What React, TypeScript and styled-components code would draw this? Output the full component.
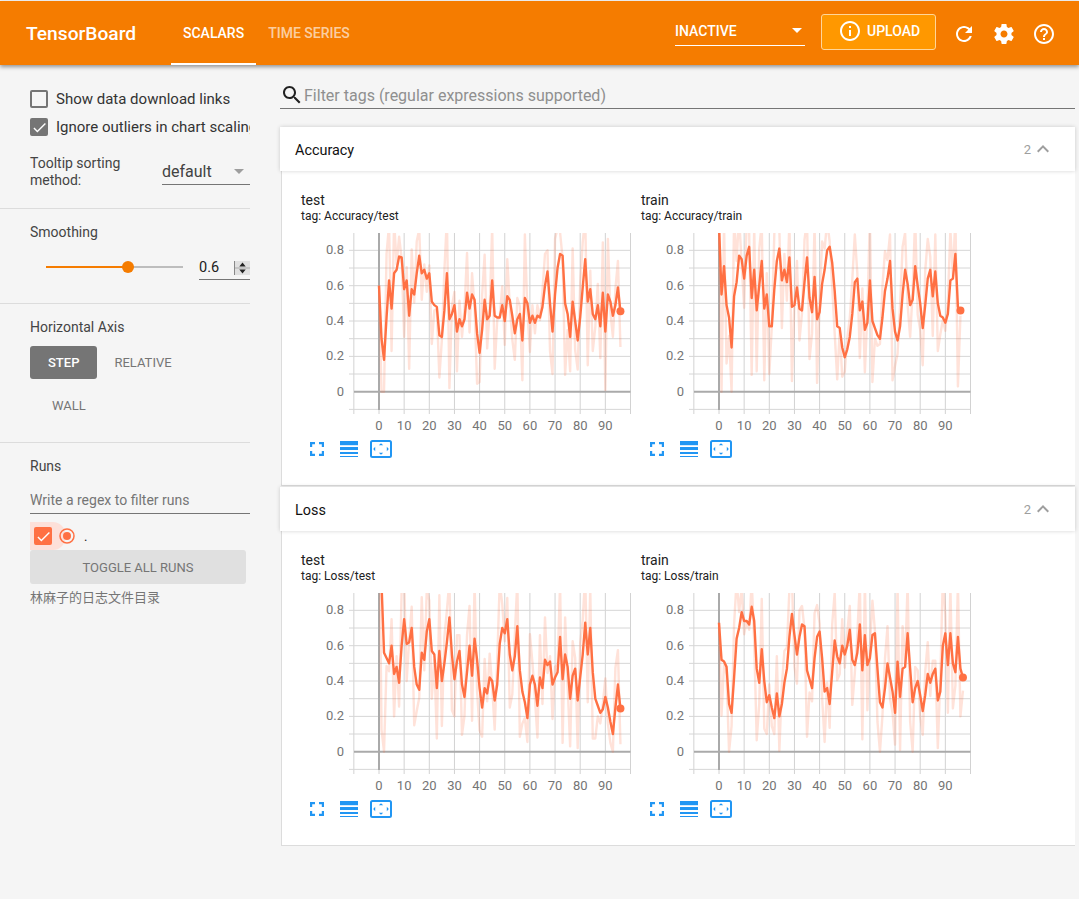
import React from "react";
import styled, { createGlobalStyle } from "styled-components";

const Global = createGlobalStyle`
  html, body { margin: 0; padding: 0; background: #f5f5f5; }
  body { font-family: Roboto, "Noto Sans CJK SC", sans-serif; color: #212121; }
  * { box-sizing: border-box; }
  input { font-family: inherit; }
`;

const Page = styled.div`
  min-height: 899px;
  padding-top: 1px;
  background: #f5f5f5;
  overflow: hidden;
`;
const Header = styled.header`
  position: relative;
  z-index: 2;
  height: 64px;
  background: #f57c00;
  display: flex;
  align-items: stretch;
  color: #fff;
  box-shadow: 0 2px 4px rgba(0, 0, 0, 0.4);
  padding-left: 26px;
  padding-right: 23px;
`;
const Logo = styled.div`
  font-size: 19.2px;
  font-weight: 500;
  line-height: 65px;
  width: 145px;
`;
const Tab = styled.div<{ $active?: boolean }>`
  font-size: 14px;
  font-weight: 500;
  line-height: 64px;
  padding: 0 12px;
  height: 64px;
  color: ${(p) => (p.$active ? "#fff" : "rgba(255,255,255,0.65)")};
  border-bottom: 2px solid ${(p) => (p.$active ? "#fff" : "transparent")};
`;
const Spacer = styled.div`
  flex: 1;
`;
const RunSelect = styled.div`
  width: 130px;
  height: 30px;
  margin-top: 15px;
  border-bottom: 1px solid #fff;
  font-size: 14px;
  font-weight: 500;
  line-height: 30px;
  display: flex;
  justify-content: space-between;
  align-items: center;
  padding-right: 3px;
`;
const Caret = styled.div<{ $color: string }>`
  width: 0;
  height: 0;
  border-left: 5px solid transparent;
  border-right: 5px solid transparent;
  border-top: 5px solid ${(p) => p.$color};
`;
const Upload = styled.div`
  width: 115px;
  height: 36px;
  margin: 13px 16px 0 16px;
  background: #ff9800;
  border: 1px solid #ffd699;
  border-radius: 3px;
  display: flex;
  align-items: center;
  padding-left: 16px;
  gap: 5px;
  font-size: 14px;
  font-weight: 500;
  padding-bottom: 2px;
`;
const HeaderIcons = styled.div`
  display: flex;
  gap: 16px;
  align-items: center;
  padding-top: 1px;
`;
const Body = styled.div`
  display: flex;
  align-items: flex-start;
`;
const Sidebar = styled.aside`
  width: 250px;
  flex: none;
`;
const Section = styled.section<{ $top: number; $bottom: number; $last?: boolean }>`
  padding: ${(p) => p.$top}px 0 ${(p) => p.$bottom}px 30px;
  border-bottom: ${(p) => (p.$last ? "none" : "1px solid #dcdcdc")};
`;
const CheckRow = styled.div`
  display: flex;
  align-items: center;
  gap: 8px;
  height: 18px;
  margin-bottom: 10px;
  font-size: 15px;
  color: #333;
  white-space: nowrap;
  overflow: hidden;
`;
const Box = styled.div<{ $checked?: boolean; $color?: string }>`
  width: 18px;
  height: 18px;
  flex: none;
  border-radius: 2px;
  border: 2px solid ${(p) => p.$color ?? "#757575"};
  background: ${(p) => (p.$checked ? p.$color ?? "#757575" : "transparent")};
  display: flex;
  align-items: center;
  justify-content: center;
  & > svg { flex: none; }
`;
const SortRow = styled.div`
  display: flex;
  align-items: flex-end;
  justify-content: space-between;
  margin-top: 19px;
`;
const SortLabel = styled.div`
  font-size: 14px;
  line-height: 17px;
  color: #444;
  width: 110px;
`;
const SortSelect = styled.div`
  width: 88px;
  height: 26px;
  margin-bottom: 4px;
  border-bottom: 1px solid #757575;
  font-size: 16px;
  line-height: 25px;
  color: #424242;
  display: flex;
  align-items: center;
  justify-content: space-between;
  padding-right: 6px;
`;
const SectionLabel = styled.div`
  font-size: 14px;
  line-height: 17px;
  color: #444;
`;
const SliderRow = styled.div`
  display: flex;
  align-items: center;
  margin-top: 14px;
  height: 25px;
  padding-left: 16px;
`;
const Track = styled.div`
  position: relative;
  width: 137px;
  height: 2px;
  margin-bottom: 1px;
  background: #bdbdbd;
`;
const Fill = styled.div`
  height: 2px;
  background: #f57c00;
`;
const Thumb = styled.div`
  position: absolute;
  top: -5px;
  width: 12px;
  height: 12px;
  margin-left: -6px;
  border-radius: 50%;
  background: #f57c00;
`;
const NumberBox = styled.div`
  width: 51px;
  height: 25px;
  margin-left: 16px;
  border-bottom: 1px solid #757575;
  font-size: 14.5px;
  line-height: 24px;
  padding-top: 1px;
  color: #212121;
  display: flex;
  justify-content: space-between;
  align-items: center;
`;
const Spin = styled.div`
  width: 16px;
  height: 14px;
  background: #e0e0e0;
  border-left: 1px solid #888;
  display: flex;
`;
const AxisButtons = styled.div`
  display: flex;
  flex-wrap: wrap;
  row-gap: 10px;
  margin-top: 10px;
  width: 200px;
`;
const AxisButton = styled.div<{ $active?: boolean; $pad: number }>`
  height: 33px;
  line-height: 33px;
  padding: 0 ${(p) => p.$pad}px;
  border-radius: 3px;
  font-size: 13px;
  font-weight: ${(p) => (p.$active ? 500 : 400)};
  background: ${(p) => (p.$active ? "#757575" : "transparent")};
  color: ${(p) => (p.$active ? "#fff" : "#757575")};
`;
const RegexInput = styled.input`
  display: block;
  width: 220px;
  height: 25px;
  margin-top: 14px;
  padding: 0 0 2px;
  border: 0;
  border-bottom: 1px solid #757575;
  background: transparent;
  font-size: 14px;
  outline: none;
  &::placeholder { color: #757575; opacity: 1; }
`;
const RunRow = styled.div`
  position: relative;
  height: 28px;
  margin-top: 8px;
  padding-left: 4px;
  display: flex;
  align-items: center;
  &::before {
    content: "";
    position: absolute;
    left: 0;
    top: 0;
    width: 35px;
    height: 28px;
    background: #fde0d9;
    border-radius: 0 12px 12px 0;
  }
`;
const RunParts = styled.div`
  position: relative;
  display: flex;
  align-items: center;
  gap: 7px;
  font-size: 13px;
`;
const RunName = styled.span`
  margin-left: 2px;
`;
const ToggleAll = styled.div`
  width: 216px;
  height: 34px;
  line-height: 35px;
  text-align: center;
  background: #e0e0e0;
  border-radius: 3px;
  font-size: 13px;
  color: #757575;
`;
const LogDir = styled.div`
  margin-top: 6px;
  font-size: 13px;
  line-height: 16px;
  color: #757575;
`;
const Main = styled.main`
  flex: 1;
  min-width: 0;
  padding: 16px 4px 0 30px;
`;
const Search = styled.div`
  height: 28px;
  display: flex;
  align-items: center;
  border-bottom: 1px solid #757575;
`;
const SearchInput = styled.input`
  flex: 1;
  border: 0;
  padding: 0;
  margin-top: 2px;
  background: transparent;
  font-size: 16px;
  outline: none;
  &::placeholder { color: #8f8f8f; opacity: 1; }
`;
const Card = styled.section`
  margin-bottom: 1px;
  &:first-of-type { margin-top: 18px; }
`;
const CardHeader = styled.div`
  height: 44px;
  background: #fff;
  display: flex;
  align-items: center;
  padding: 0 20px 0 15px;
  font-size: 14.4px;
  color: #111;
  position: relative;
  box-shadow: 0 0 4px rgba(0, 0, 0, 0.18);
`;
const CardTitle = styled.div`
  flex: 1;
  padding-top: 2px;
`;
const Count = styled.span`
  font-size: 13px;
  color: #9e9e9e;
  padding-top: 1px;
`;
const CardBody = styled.div`
  height: 315px;
  margin-left: 1px;
  background: #fff;
  border: 1px solid #dcdcdc;
  border-right: 0;
  border-top: 0;
  padding: 21px 0 0 19px;
  display: flex;
`;
const ChartCell = styled.div`
  width: 340px;
`;
const ChartName = styled.div`
  font-size: 14px;
  line-height: 17px;
  color: #212121;
`;
const ChartTag = styled.div`
  font-size: 12px;
  line-height: 14px;
  color: #212121;
`;
const ChartSvg = styled.svg`
  display: block;
  margin-top: 2px;
`;
const ChartTools = styled.div`
  display: flex;
  align-items: center;
  margin-top: 5px;
  height: 18px;
  padding-left: 9px;
`;
const ToolFull = styled.svg`
  margin-right: 16px;
`;
const ToolLines = styled.svg`
  margin-right: 12px;
`;

const ORANGE = "#ff7043";
const S0 = 78;
const STEP = 2.515;
const Y0 = 166.7;
const UNIT = 176.7;
const RIGHT = 329.5;

function Chart({ data, id }: { data: number[]; id: string }) {
  const x = (i: number) => S0 + i * STEP;
  const y = (v: number) => Y0 - v * UNIT;
  const raw = data.map((v, i) =>
    i === 0 ? v : Math.max(0, Math.min(1.3, (v - 0.6 * data[i - 1]) / 0.4))
  );
  const pts = (a: number[]) => a.map((v, i) => `${x(i).toFixed(2)},${y(v).toFixed(2)}`).join(" ");
  const last = data.length - 1;
  const columns = Array.from({ length: 12 }, (_, i) => S0 + (i - 1) * 25.15);
  return (
    <ChartSvg width="332" height="210" viewBox="0 0 332 210">
      <defs>
        <clipPath id={id}>
          <rect x="53" y="8" width="277" height="177" />
        </clipPath>
      </defs>
      {columns.map((gx) => (
        <line key={gx} x1={gx} x2={gx} y1="8" y2="189" stroke="#d2d2d2" />
      ))}
      {[8, 7, 6, 5, 4, 3, 2, 1, -1].map((k) => (
        <line key={k} x1="48" x2={RIGHT} y1={Y0 - (k / 10) * UNIT} y2={Y0 - (k / 10) * UNIT} stroke="#d6d6d6" />
      ))}
      <line x1="53" x2={RIGHT} y1={Y0} y2={Y0} stroke="#aaa" strokeWidth="2" />
      <line x1={S0} x2={S0} y1="8" y2="185" stroke="#aaa" strokeWidth="2" />
      <g clipPath={`url(#${id})`}>
        <polyline points={pts(raw)} fill="none" stroke={ORANGE} strokeOpacity="0.2" strokeWidth="2.4" strokeLinejoin="round" />
        <polyline points={pts(data)} fill="none" stroke={ORANGE} strokeWidth="2.4" strokeLinejoin="round" />
        <circle cx={x(last)} cy={y(data[last])} r="4" fill={ORANGE} />
      </g>
      {[0.8, 0.6, 0.4, 0.2, 0].map((v) => (
        <text key={v} x="43" y={y(v) + 4} textAnchor="end" fontSize="13" fill="#757575" fontFamily="Roboto, sans-serif">
          {v}
        </text>
      ))}
      {[0, 10, 20, 30, 40, 50, 60, 70, 80, 90].map((v) => (
        <text key={v} x={S0 + v * STEP} y="205" textAnchor="middle" fontSize="13" fill="#757575" fontFamily="Roboto, sans-serif">
          {v}
        </text>
      ))}
    </ChartSvg>
  );
}

function Tools() {
  return (
    <ChartTools>
      <ToolFull width="14" height="14" viewBox="0 0 14 14" fill="none" stroke="#2196f3" strokeWidth="2.2">
        <path d="M1.1 5V1.1H5M9 1.1h3.9V5M12.9 9v3.9H9M5 12.9H1.1V9" />
      </ToolFull>
      <ToolLines width="18" height="16" viewBox="0 0 18 16" fill="#2196f3">
        <rect x="0" y="0" width="18" height="4.2" />
        <rect x="0" y="6" width="18" height="3" />
        <rect x="0" y="11" width="18" height="2" />
        <rect x="0" y="15" width="18" height="1" />
      </ToolLines>
      <svg width="22" height="18" viewBox="0 0 22 18">
        <rect x="1" y="1" width="20" height="16" rx="1.5" fill="none" stroke="#2196f3" strokeWidth="2" />
        <path d="M11 3.2l2.2 2H8.8zM11 14.8l-2.2-2h4.4zM3.2 9l2-2.2v4.4zM18.8 9l-2 2.2V6.800z" fill="#2196f3" />
      </svg>
    </ChartTools>
  );
}

const CHECK = "M9 16.17L4.83 12l-1.42 1.41L9 19 21 7l-1.41-1.41z";
function Icon({ d, size = 24, fill = "#fff" }: { d: string; size?: number; fill?: string }) {
  return (
    <svg width={size} height={size} viewBox="0 0 24 24" fill={fill}>
      <path d={d} />
    </svg>
  );
}
const REFRESH = "M17.65 6.35C16.2 4.9 14.21 4 12 4c-4.42 0-7.99 3.58-7.99 8s3.57 8 7.99 8c3.73 0 6.84-2.55 7.73-6h-2.08c-.82 2.33-3.04 4-5.65 4-3.31 0-6-2.69-6-6s2.69-6 6-6c1.66 0 3.14.69 4.22 1.78L13 11h7V4l-2.35 2.35z";
const GEAR = "M19.43 12.98c.04-.32.07-.64.07-.98s-.03-.66-.07-.98l2.11-1.65c.19-.15.24-.42.12-.64l-2-3.46c-.12-.22-.39-.3-.61-.22l-2.49 1c-.52-.4-1.08-.73-1.69-.98l-.38-2.65C14.46 2.18 14.25 2 14 2h-4c-.25 0-.46.18-.49.42l-.38 2.65c-.61.25-1.17.59-1.69.98l-2.49-1c-.23-.09-.49 0-.61.22l-2 3.46c-.13.22-.07.49.12.64l2.11 1.65c-.04.32-.07.65-.07.98s.03.66.07.98l-2.11 1.65c-.19.15-.24.42-.12.64l2 3.46c.12.22.39.3.61.22l2.49-1c.52.4 1.08.73 1.69.98l.38 2.65c.03.24.24.42.49.42h4c.25 0 .46-.18.49-.42l.38-2.65c.61-.25 1.17-.59 1.69-.98l2.49 1c.23.09.49 0 .61-.22l2-3.46c.12-.22.07-.49-.12-.64l-2.11-1.65zM12 15.5c-1.93 0-3.5-1.57-3.5-3.5s1.57-3.5 3.5-3.5 3.5 1.57 3.5 3.5-1.57 3.5-3.5 3.5z";
const HELP = "M11 18h2v-2h-2v2zm1-16C6.48 2 2 6.48 2 12s4.48 10 10 10 10-4.48 10-10S17.52 2 12 2zm0 18c-4.41 0-8-3.59-8-8s3.59-8 8-8 8 3.59 8 8-3.59 8-8 8zm0-14c-2.21 0-4 1.79-4 4h2c0-1.1.9-2 2-2s2 .9 2 2c0 2-3 1.75-3 5h2c0-2.25 3-2.5 3-5 0-2.21-1.79-4-4-4z";
const INFO = "M11 17h2v-6h-2v6zm1-15C6.48 2 2 6.48 2 12s4.48 10 10 10 10-4.48 10-10S17.52 2 12 2zm0 18c-4.41 0-8-3.59-8-8s3.59-8 8-8 8 3.59 8 8-3.59 8-8 8zM11 9h2V7h-2v2z";
const SEARCH = "M15.5 14h-.79l-.28-.27C15.41 12.59 16 11.11 16 9.5 16 5.91 13.09 3 9.5 3S3 5.91 3 9.5 5.91 16 9.5 16c1.61 0 3.09-.59 4.23-1.57l.27.28v.79l5 4.99L20.49 19l-4.99-5zm-6 0C7.01 14 5 11.99 5 9.5S7.01 5 9.5 5 14 7.01 14 9.5 11.99 14 9.5 14z";
const LESS = "M12 8l-6 6 1.41 1.41L12 10.83l4.59 4.58L18 14z";

const ACC_TEST = [.6,.3,.18,.42,.63,.47,.67,.69,.765,.76,.58,.63,.43,.58,.55,.67,.77,.67,.69,.64,.67,.51,.49,.48,.32,.31,.46,.67,.41,.44,.49,.34,.41,.37,.41,.56,.47,.55,.52,.33,.22,.35,.52,.41,.43,.63,.43,.42,.42,.49,.4,.54,.52,.43,.33,.41,.44,.29,.53,.5,.39,.43,.39,.43,.42,.48,.6,.68,.5,.34,.55,.7,.78,.77,.5,.44,.31,.51,.4,.29,.42,.59,.75,.51,.58,.44,.41,.49,.37,.56,.34,.55,.51,.43,.49,.59,.455];
const ACC_TRAIN = [.95,.55,.71,.49,.42,.25,.54,.62,.77,.75,.64,.77,.82,.53,.69,.46,.6,.74,.47,.55,.37,.37,.58,.74,.81,.63,.69,.62,.76,.48,.49,.59,.47,.46,.62,.76,.53,.45,.65,.41,.45,.61,.69,.8,.82,.73,.57,.37,.36,.25,.195,.24,.31,.44,.62,.64,.46,.51,.35,.39,.63,.4,.36,.32,.3,.42,.57,.64,.74,.47,.34,.29,.37,.55,.69,.61,.49,.52,.71,.6,.5,.36,.49,.64,.69,.54,.68,.5,.43,.42,.39,.44,.63,.64,.78,.48,.46];
const LOSS_TEST = [1.5,.95,.56,.53,.5,.6,.44,.48,.39,.6,.75,.61,.62,.7,.48,.38,.35,.56,.52,.68,.75,.57,.55,.36,.57,.4,.5,.62,.76,.55,.41,.51,.57,.38,.31,.45,.6,.43,.64,.52,.36,.25,.36,.33,.42,.4,.29,.38,.61,.7,.67,.75,.55,.46,.54,.71,.46,.34,.28,.19,.38,.43,.38,.26,.42,.36,.52,.49,.51,.38,.42,.45,.65,.41,.55,.48,.3,.43,.47,.29,.42,.55,.73,.55,.7,.45,.3,.26,.22,.24,.31,.25,.17,.1,.25,.38,.245];
const LOSS_TRAIN = [.73,.52,.51,.48,.27,.22,.42,.64,.7,.79,.74,.74,.72,.82,.74,.47,.39,.58,.4,.28,.32,.25,.19,.33,.2,.27,.39,.47,.65,.78,.66,.55,.65,.72,.71,.46,.41,.36,.53,.65,.68,.53,.34,.36,.27,.45,.63,.54,.5,.6,.55,.6,.69,.52,.49,.56,.72,.46,.66,.49,.53,.66,.67,.47,.28,.25,.36,.5,.42,.34,.22,.51,.31,.47,.48,.67,.47,.28,.36,.4,.32,.23,.32,.44,.39,.44,.47,.29,.34,.6,.67,.49,.67,.5,.45,.65,.47,.42];

const CARDS = [
  { title: "Accuracy", charts: [{ name: "test", tag: "Accuracy/test", data: ACC_TEST }, { name: "train", tag: "Accuracy/train", data: ACC_TRAIN }] },
  { title: "Loss", charts: [{ name: "test", tag: "Loss/test", data: LOSS_TEST }, { name: "train", tag: "Loss/train", data: LOSS_TRAIN }] },
];

export default function App() {
  return (
    <Page>
      <Global />
      <Header>
        <Logo>TensorBoard</Logo>
        <Tab $active>SCALARS</Tab>
        <Tab>TIME SERIES</Tab>
        <Spacer />
        <RunSelect>
          INACTIVE
          <Caret $color="#fff" />
        </RunSelect>
        <Upload>
          <Icon d={INFO} />
          UPLOAD
        </Upload>
        <HeaderIcons>
          <Icon d={REFRESH} />
          <Icon d={GEAR} />
          <Icon d={HELP} />
        </HeaderIcons>
      </Header>
      <Body>
        <Sidebar>
          <Section $top={25} $bottom={19}>
            <CheckRow>
              <Box />
              Show data download links
            </CheckRow>
            <CheckRow>
              <Box $checked>
                <Icon d={CHECK} size={17} />
              </Box>
              Ignore outliers in chart scaling
            </CheckRow>
            <SortRow>
              <SortLabel>Tooltip sorting method:</SortLabel>
              <SortSelect>
                default
                <Caret $color="#9e9e9e" />
              </SortSelect>
            </SortRow>
          </Section>
          <Section $top={15} $bottom={23}>
            <SectionLabel>Smoothing</SectionLabel>
            <SliderRow>
              <Track>
                <Fill style={{ width: "60%" }} />
                <Thumb style={{ left: "60%" }} />
              </Track>
              <NumberBox>
                0.6
                <Spin>
                  <svg width="15" height="14" viewBox="0 0 15 14">
                    <path d="M7.5 1.5l3.2 4h-6.4zM7.500 12.5l-3.2-4h6.4z" fill="#222" />
                    <line x1="0" x2="15" y1="7" y2="7" stroke="#aaa" />
                  </svg>
                </Spin>
              </NumberBox>
            </SliderRow>
          </Section>
          <Section $top={15} $bottom={20}>
            <SectionLabel>Horizontal Axis</SectionLabel>
            <AxisButtons>
              <AxisButton $active $pad={18}>STEP</AxisButton>
              <AxisButton $pad={17}>RELATIVE</AxisButton>
              <AxisButton $pad={22}>WALL</AxisButton>
            </AxisButtons>
          </Section>
          <Section $top={15} $bottom={0} $last>
            <SectionLabel>Runs</SectionLabel>
            <RegexInput placeholder="Write a regex to filter runs" />
            <RunRow>
              <RunParts>
                <Box $checked $color={ORANGE}>
                  <Icon d={CHECK} size={17} />
                </Box>
                <svg width="16" height="16" viewBox="0 0 16 16">
                  <circle cx="8" cy="8" r="7" fill="none" stroke={ORANGE} strokeWidth="1.5" />
                  <circle cx="8" cy="8" r="4" fill={ORANGE} />
                </svg>
                <RunName>.</RunName>
              </RunParts>
            </RunRow>
            <ToggleAll>TOGGLE ALL RUNS</ToggleAll>
            <LogDir>林麻子的日志文件目录</LogDir>
          </Section>
        </Sidebar>
        <Main>
          <Search>
            <Icon d={SEARCH} fill="#212121" />
            <SearchInput placeholder="Filter tags (regular expressions supported)" />
          </Search>
          {CARDS.map((c) => (
            <Card key={c.title}>
              <CardHeader>
                <CardTitle>{c.title}</CardTitle>
                <Count>2</Count>
                <Icon d={LESS} fill="#9e9e9e" />
              </CardHeader>
              <CardBody>
                {c.charts.map((ch) => (
                  <ChartCell key={ch.tag}>
                    <ChartName>{ch.name}</ChartName>
                    <ChartTag>tag: {ch.tag}</ChartTag>
                    <Chart data={ch.data} id={ch.tag.replace("/", "-")} />
                    <Tools />
                  </ChartCell>
                ))}
              </CardBody>
            </Card>
          ))}
        </Main>
      </Body>
    </Page>
  );
}
